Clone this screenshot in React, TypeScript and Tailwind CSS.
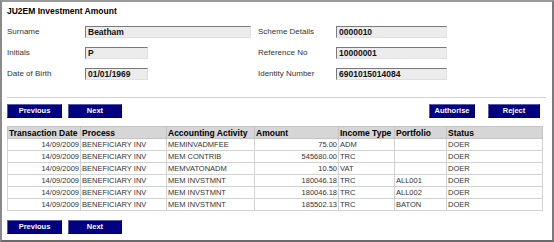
import React from "react";

const rows = [
  ["14/09/2009", "BENEFICIARY INV", "MEMINVADMFEE", "75.00", "ADM", "", "DOER"],
  ["14/09/2009", "BENEFICIARY INV", "MEM CONTRIB", "545680.00", "TRC", "", "DOER"],
  ["14/09/2009", "BENEFICIARY INV", "MEMVATONADM", "10.50", "VAT", "", "DOER"],
  ["14/09/2009", "BENEFICIARY INV", "MEM INVSTMNT", "180046.18", "TRC", "ALL001", "DOER"],
  ["14/09/2009", "BENEFICIARY INV", "MEM INVSTMNT", "180046.18", "TRC", "ALL002", "DOER"],
  ["14/09/2009", "BENEFICIARY INV", "MEM INVSTMNT", "185502.13", "TRC", "BATON", "DOER"],
];

const widths = [73, 86, 88, 84, 56, 52, 96];
const headers = ["Transaction Date", "Process", "Accounting Activity", "Amount", "Income Type", "Portfolio", "Status"];

function Field({ value, w }: { value: string; w: string }) {
  return (
    <div
      className={`${w} h-[12px] bg-[#ececec] border-t border-l border-t-[#7a7a7a] border-l-[#7a7a7a] border-r border-b border-r-[#e0e0e0] border-b-[#e0e0e0] text-[8.5px] leading-[10px] font-bold text-[#111] pl-[2px] flex items-center`}
    >
      {value}
    </div>
  );
}

function Btn({ label, w }: { label: string; w: string }) {
  return (
    <div
      className={`${w} h-[14px] bg-[#000080] border border-t-[#5a5ab0] border-l-[#5a5ab0] border-r-[#00003a] border-b-[#00003a] text-white font-bold text-[7.5px] leading-[12px] flex items-center justify-center`}
    >
      {label}
    </div>
  );
}

export default function App() {
  return (
    <div className="w-[554px] h-[242px] bg-white border-2 border-t-[#9a9a9a] border-l-[#8a8a8a] border-r-[#7a7a7a] border-b-[#6a6a6a] px-[5px] font-['Liberation_Sans',Arial,sans-serif] text-[#222] overflow-hidden">
      <div className="pt-[4px] text-[8.5px] leading-[10px] font-bold text-black">JU2EM Investment Amount</div>

      <div className="mt-[10px] flex flex-col gap-[9px] text-[8px] leading-[10px] text-[#333]">
        <div className="flex items-center h-[12px]">
          <div className="w-[251px] flex items-center">
            <div className="w-[78px]">Surname</div>
            <Field value="Beatham" w="w-[166px]" />
          </div>
          <div className="w-[78px]">Scheme Details</div>
          <Field value="0000010" w="w-[111px]" />
        </div>
        <div className="flex items-center h-[12px]">
          <div className="w-[251px] flex items-center">
            <div className="w-[78px]">Initials</div>
            <Field value="P" w="w-[63px]" />
          </div>
          <div className="w-[78px]">Reference No</div>
          <Field value="10000001" w="w-[111px]" />
        </div>
        <div className="flex items-center h-[12px]">
          <div className="w-[251px] flex items-center">
            <div className="w-[78px]">Date of Birth</div>
            <Field value="01/01/1969" w="w-[63px]" />
          </div>
          <div className="w-[78px]">Identity Number</div>
          <Field value="6901015014084" w="w-[111px]" />
        </div>
      </div>

      <div className="mt-[17px] w-[539px] h-px bg-[#d6d2bc]" />

      <div className="mt-[6px] flex items-center justify-between w-[533px]">
        <div className="flex gap-[6px]">
          <Btn label="Previous" w="w-[55px]" />
          <Btn label="Next" w="w-[54px]" />
        </div>
        <div className="flex gap-[13px]">
          <Btn label="Authorise" w="w-[46px]" />
          <Btn label="Reject" w="w-[52px]" />
        </div>
      </div>

      <table className="mt-[8px] border-collapse table-fixed w-[535px] border border-[#b8b8b8]">
        <colgroup>
          {widths.map((w, i) => (
            <col key={i} style={{ width: w }} />
          ))}
        </colgroup>
        <thead>
          <tr className="h-[12px] bg-[#d6d6d6]">
            {headers.map((h, i) => (
              <th
                key={i}
                className="border border-[#c4c4c4] text-left font-bold text-[8.5px] leading-[10px] text-black px-[1px] p-0 whitespace-nowrap overflow-hidden"
              >
                {h}
              </th>
            ))}
          </tr>
        </thead>
        <tbody>
          {rows.map((r, ri) => (
            <tr key={ri} className="h-[12px]">
              {r.map((c, ci) => (
                <td
                  key={ci}
                  className={`border border-[#d2d2d2] text-[7.5px] leading-[10px] text-[#333] p-0 whitespace-nowrap overflow-hidden ${
                    ci === 0 || ci === 3 ? "text-right pr-[1px]" : "text-left pl-[1px]"
                  }`}
                >
                  {c}
                </td>
              ))}
            </tr>
          ))}
        </tbody>
      </table>

      <div className="mt-[9px] flex gap-[6px]">
        <Btn label="Previous" w="w-[55px]" />
        <Btn label="Next" w="w-[54px]" />
      </div>
    </div>
  );
}
